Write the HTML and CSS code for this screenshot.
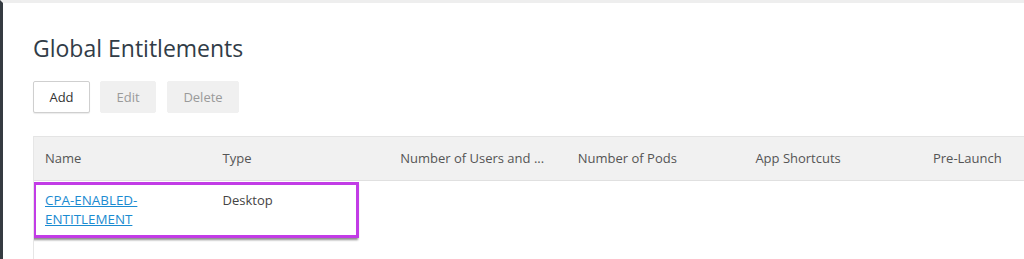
FILE: index.html
```html
<!DOCTYPE html>
<html lang="en">
<head>
  <meta charset="UTF-8">
  <meta name="viewport" content="width=device-width, initial-scale=1.0">
  <title>Global Entitlements</title>
  <link rel="stylesheet" href="styles.css">
</head>
<body>

<div id="content">
  <h1 class="title">Global Entitlements</h1>

  <div class="toolbar">
    <button class="btn btn-add">Add</button>
    <button class="btn btn-edit" disabled>Edit</button>
    <button class="btn btn-delete" disabled>Delete</button>
  </div>

  <div class="grid">
    <div class="grid-head">
      <div class="cell">Name</div>
      <div class="cell">Type</div>
      <div class="cell">Number of Users and ...</div>
      <div class="cell">Number of Pods</div>
      <div class="cell">App Shortcuts</div>
      <div class="cell">Pre-Launch</div>
    </div>
    <div class="grid-row">
      <div class="cell"><a href="#">CPA-ENABLED-ENTITLEMENT</a></div>
      <div class="cell">Desktop</div>
      <div class="cell"></div>
      <div class="cell"></div>
      <div class="cell"></div>
      <div class="cell"></div>
      <div class="highlight"></div>
    </div>
  </div>
</div>

</body>
</html>
```

FILE: styles.css
```css
body {
  font-family: "Open Sans", Arial, sans-serif;
  margin: 0;
  padding: 0;
  background-color: #fff;
  color: #333;
  height: 259px;
  overflow: hidden;
}
#content {
  border-left: 3px solid #353b41;
  border-top: 3px solid #eeeeee;
  padding-left: 30px;
  height: 256px;
}
.title {
  font-size: 23px;
  font-weight: 400;
  line-height: 30px;
  color: #313c47;
  margin: 30px 0 0;
}
.toolbar {
  display: flex;
  gap: 10px;
  margin-top: 18px;
}
.btn {
  font-family: "Open Sans", Arial, sans-serif;
  font-size: 13px;
  height: 32px;
  padding: 0;
  background-color: #fff;
  color: #333;
  border: 1px solid #cfcfcf;
  border-radius: 2px;
  box-shadow: 0 1px 1px rgba(0, 0, 0, 0.08);
}
.btn-add {
  width: 57px;
}
.btn-edit {
  width: 56px;
}
.btn-delete {
  width: 72px;
  margin-left: 1px;
}
.btn[disabled] {
  background-color: #f0f0f0;
  border-color: #f0f0f0;
  color: #9a9a9a;
  box-shadow: none;
}
.grid {
  margin-top: 23px;
  border-left: 1px solid #e6e6e6;
  font-size: 13px;
  overflow: hidden;
}
.grid-head, .grid-row {
  display: grid;
  grid-template-columns: repeat(6, 177.6px);
  margin-left: -1px;
}
.grid-head {
  background-color: #f1f1f1;
  border-top: 1px solid #e4e4e4;
  border-bottom: 1px solid #e0e0e0;
  height: 43px;
  align-items: center;
  color: #555;
}
.grid-row {
  position: relative;
  padding-top: 10px;
  height: 70px;
}
.cell {
  padding: 0 12px;
  line-height: 19px;
  white-space: nowrap;
}
.grid-row .cell {
  white-space: normal;
  color: #444;
}
.grid-row a {
  color: #1b8bd1;
  text-decoration: underline;
  display: inline-block;
  width: 100px;
  font-size: 13.4px;
}
.highlight {
  position: absolute;
  left: 0;
  top: 1px;
  width: 320px;
  height: 50px;
  border: 3px solid #c23ce6;
  box-shadow: -1px 2px 2px rgba(0, 0, 0, 0.45);
}
```
